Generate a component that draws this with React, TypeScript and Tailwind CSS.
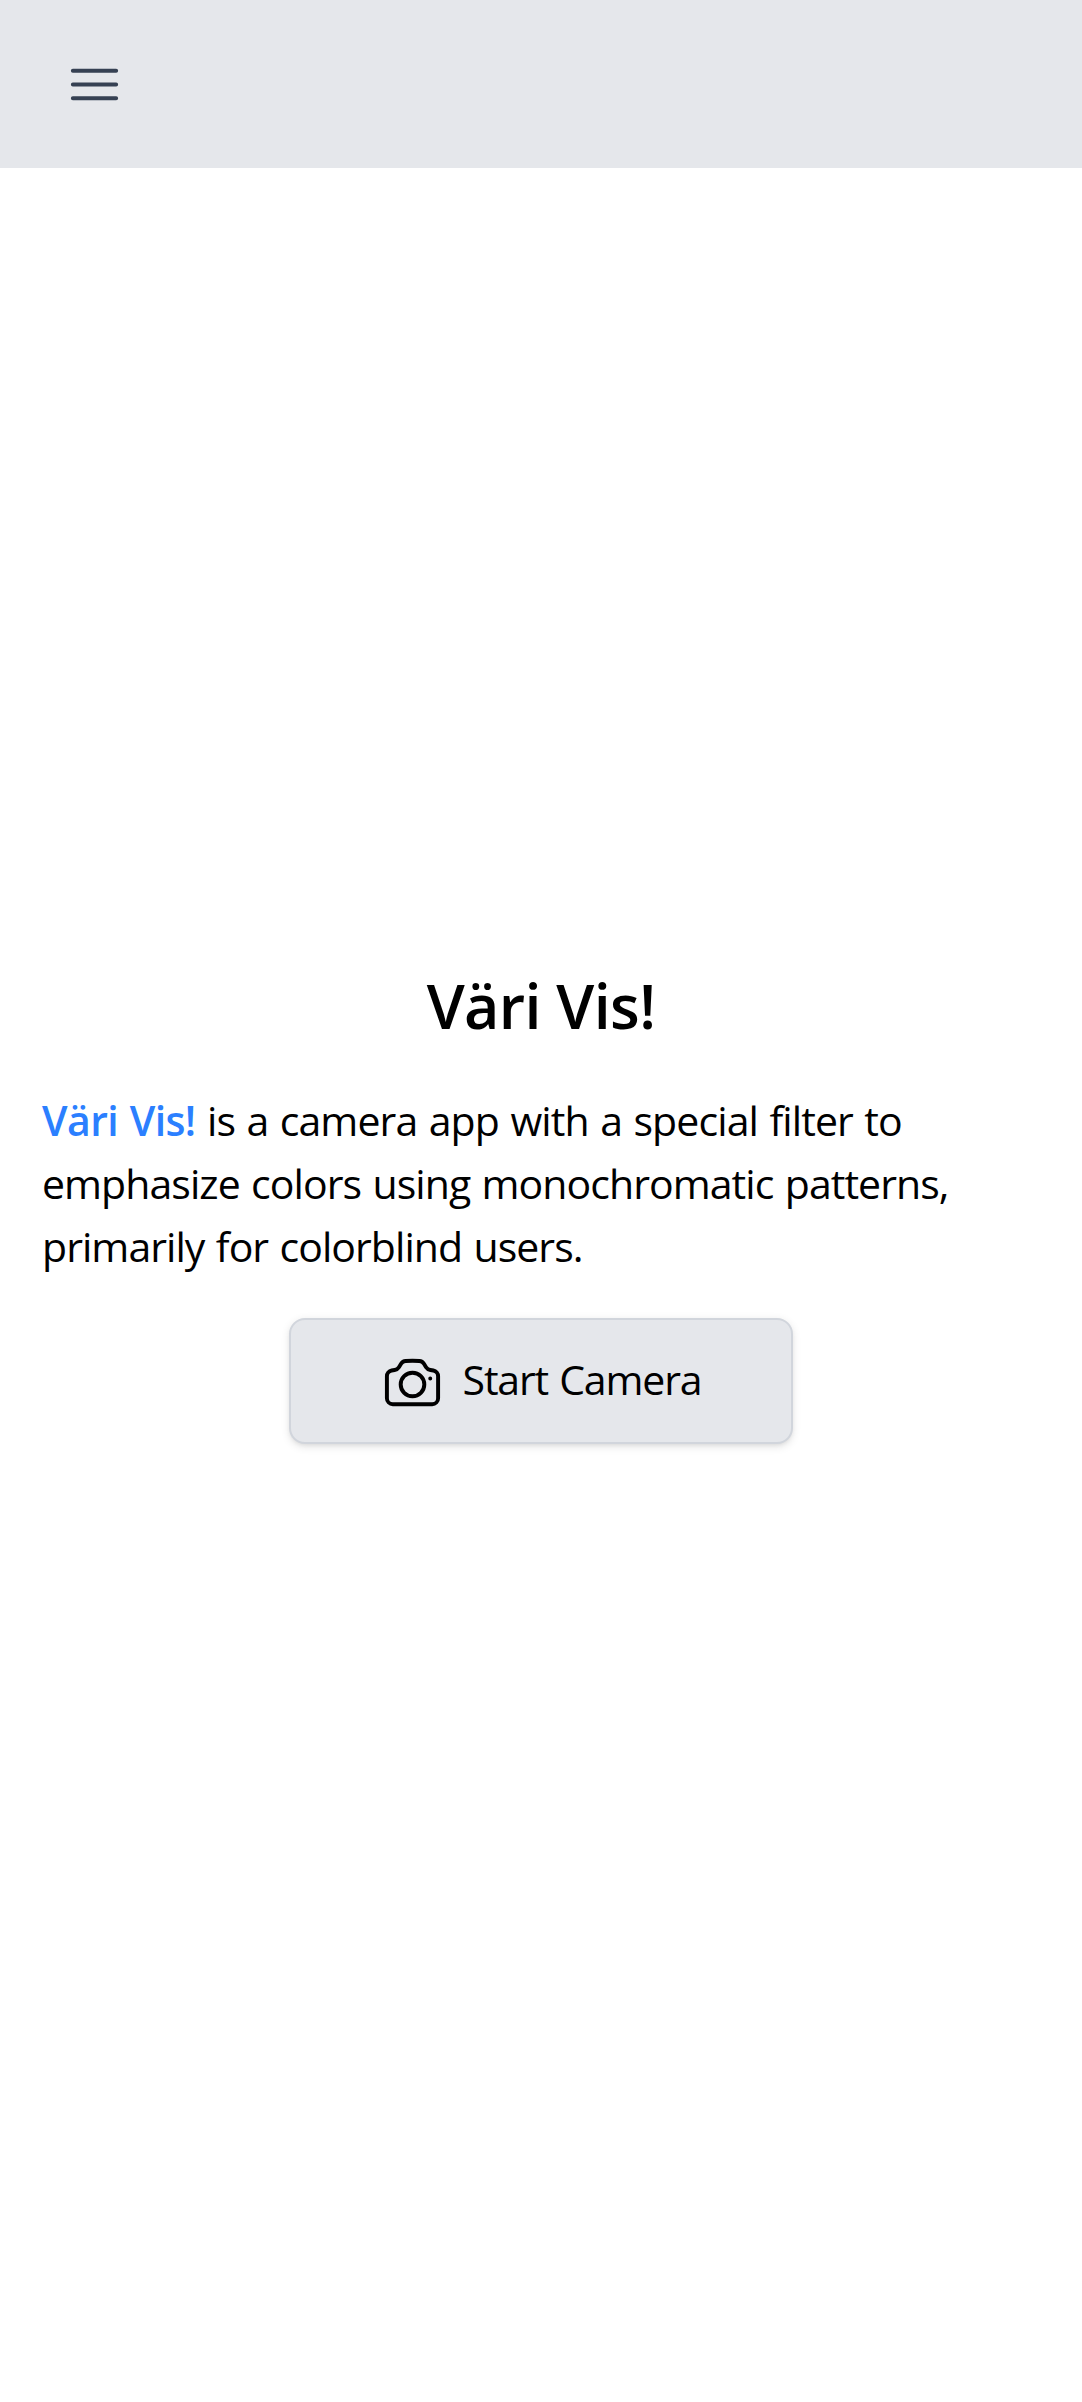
import { HiOutlineBars3, HiOutlineCamera } from "react-icons/hi2";

function Header() {
  return (
    <header className="flex h-[168px] items-center bg-gray-200 px-[63px]">
      <button type="button" aria-label="Open menu" className="text-gray-700">
        <HiOutlineBars3 className="size-[63px]" />
      </button>
    </header>
  );
}

export default function App() {
  return (
    <div className="flex h-[2402px] flex-col bg-white font-['Open_Sans','Noto_Sans',sans-serif] text-black">
      <Header />
      <main className="flex flex-col items-center px-[42px] pt-[796px]">
        <h1 className="h-[84px] text-[61px] leading-[84px] font-semibold tracking-[-0.6px] whitespace-nowrap">Väri Vis!</h1>
        <p className="mt-[41px] w-full text-[41px] leading-[63px] [word-spacing:1.6px]">
          <span className="block tracking-[-0.88px] whitespace-nowrap">
            <span className="font-semibold tracking-[-0.6px] text-[#2b7fff]">Väri Vis!</span> is a camera app with a
            special filter to
          </span>
          <span className="block tracking-[-0.93px] whitespace-nowrap">
            emphasize colors using monochromatic patterns,
          </span>
          <span className="block tracking-[-0.94px] whitespace-nowrap">primarily for colorblind users.</span>
        </p>
        <button
          type="button"
          className="mt-[40px] flex h-[126px] w-[504px] items-center justify-center gap-[19px] rounded-[16px] border-2 border-gray-300 bg-gray-200 text-[41px] leading-[63px] tracking-[-1.15px] shadow-[0_2.6px_8px_rgba(0,0,0,0.1),0_2.6px_5px_-2.6px_rgba(0,0,0,0.1)] [word-spacing:1.6px]"
        >
          <HiOutlineCamera className="mt-[3px] size-[63px]" />
          <span className="pb-1 whitespace-nowrap">Start Camera</span>
        </button>
      </main>
    </div>
  );
}
